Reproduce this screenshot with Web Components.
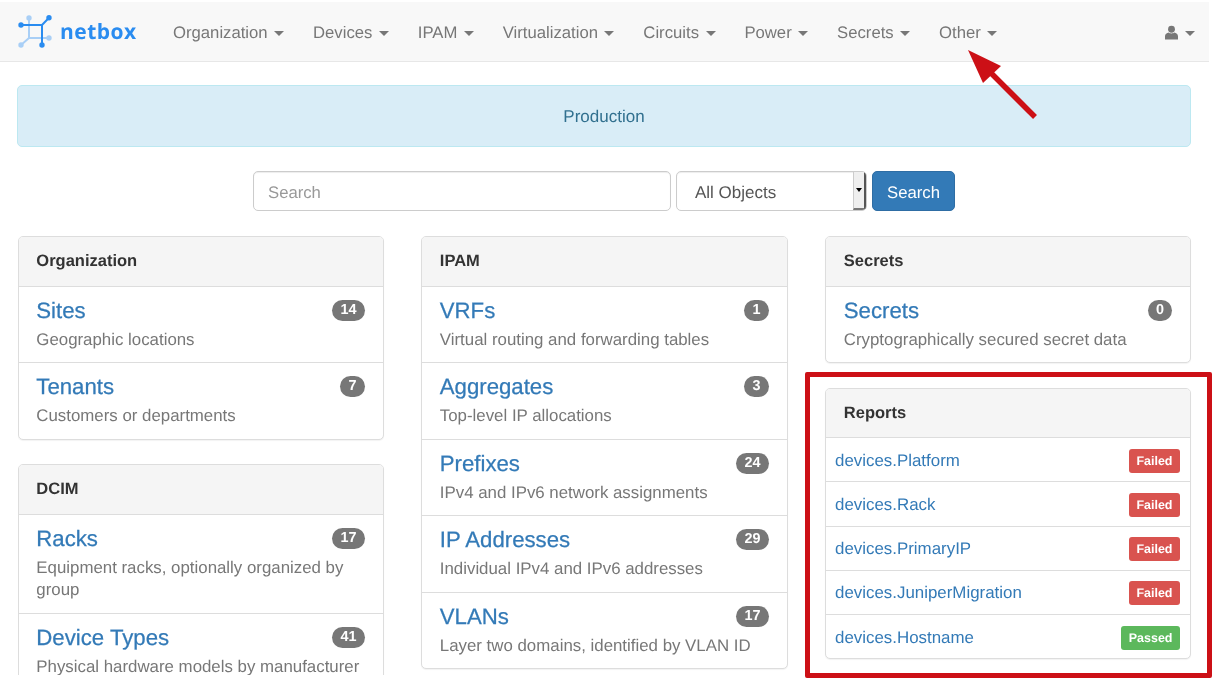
<!DOCTYPE html>
<html><head><meta charset="utf-8">
<style>
html,body{margin:0;padding:0;height:686px;overflow:hidden;background:#fff}
body{font-family:"Liberation Sans",Arial,sans-serif;font-size:17px;color:#333;position:relative;text-rendering:geometricPrecision;filter:blur(.3px)}
</style></head><body>
<template id="t-nav"><style>
:host{display:flex;align-items:center;width:1209px;height:59px;margin-top:2px;background:#f8f8f8;border-bottom:1px solid #e7e7e7;color:#777;font-size:16.7px}
.logo{display:flex;align-items:center;margin-left:18px;gap:8px;width:119px;flex:none}
.logo b{font:700 21px "Open Sans","Liberation Sans",sans-serif;color:#2a8cf0;letter-spacing:.5px;margin-top:1px}
.items{display:flex;flex:1;margin-left:36px;gap:28.9px;padding-top:2px}
.c{width:0;height:0;border-left:5px solid transparent;border-right:5px solid transparent;border-top:5px solid #777;margin-top:2px}
.user{display:flex;align-items:center;gap:7px;margin-right:14px;padding-top:2px}
</style>
<div class="logo"><svg width="34" height="33" viewBox="0 0 34 33" fill="none"><g stroke="#a9cff6" stroke-width="2"><path d="M11 3V23H31M11 23L3 30"/></g><g fill="#a9cff6"><circle cx="11" cy="3" r="2.7"/><circle cx="31" cy="23" r="2.7"/><circle cx="3" cy="30" r="2.7"/></g><g stroke="#2a8cf0" stroke-width="2"><path d="M3 10H24M24 10L31 2.8M24 10V30"/></g><g fill="#2a8cf0"><circle cx="3" cy="10" r="2.7"/><circle cx="31" cy="2.8" r="2.7"/><circle cx="24" cy="30" r="2.7"/></g></svg><b>netbox</b></div>
<div class="items"><slot></slot></div>
<div class="user"><svg width="13" height="15" viewBox="0 0 14 15" fill="#777"><circle cx="7" cy="4" r="3.7"/><path d="M0 15V11.5C0 9 2 8 4 7.5C5 8.8 9 8.8 10 7.5C12 8 14 9 14 11.5V15Z"/></svg><span class="c"></span></div>
</template>
<template id="t-navitem"><style>
:host{display:inline-flex;align-items:center;gap:6.5px;white-space:nowrap;color:#777}
.c{width:0;height:0;border-left:5px solid transparent;border-right:5px solid transparent;border-top:5px solid #777;margin-top:2px}
</style><slot></slot><span class="c"></span></template>
<template id="t-alert"><style>
:host{display:block;margin:23px 0 0 17px;width:1174px;height:62px;box-sizing:border-box;background:#d9edf7;border:1px solid #bce8f1;border-radius:5px;color:#31708f;text-align:center;line-height:62px}
</style><slot></slot></template>
<template id="t-search"><style>
:host{display:flex;margin:24px 0 0 253px;height:40px;gap:5px}
.in,.sel{box-sizing:border-box;height:40px;padding-top:3px;border:1px solid #ccc;border-radius:5px;background:#fff;box-shadow:inset 0 1px 1px rgba(0,0,0,.075);display:flex;align-items:center}
.in{width:418px;padding-left:14px;color:#999;font-size:16.7px}
.sel{width:191px;padding-left:18px;color:#555;position:relative;overflow:hidden}
.sp{position:absolute;right:0;top:0;bottom:0;width:13px;background:#efefef;border-left:1px solid #ccc;border-right:2px solid #555;border-bottom:2px solid #777;box-sizing:border-box;display:flex;align-items:center;justify-content:center}
.sp i{width:0;height:0;border-left:3.5px solid transparent;border-right:3.5px solid transparent;border-top:4px solid #000}
.btn{box-sizing:border-box;width:83px;height:40px;padding-top:3px;background:#337ab7;border:1px solid #2e6da4;border-radius:5px;color:#fff;display:flex;align-items:center;justify-content:center;font-size:16.7px}
</style>
<div class="in">Search</div><div class="sel">All Objects<span class="sp"><i></i></span></div><div class="btn">Search</div></template>
<template id="t-grid"><style>
:host{display:grid;grid-template-columns:366px 366.5px 366px;column-gap:37.5px;margin:25px 0 0 17.5px;align-items:start;height:439px;overflow:hidden;padding-right:6px}
</style><slot></slot></template>
<template id="t-col"><style>
:host{display:flex;flex-direction:column;gap:24.5px;min-width:0}
</style><slot></slot></template>
<template id="t-panel"><style>
:host{display:block;box-sizing:border-box;background:#fff;border:1px solid #ddd;border-radius:5px;box-shadow:0 1px 1px rgba(0,0,0,.05);overflow:hidden}
.h{height:49.5px;box-sizing:border-box;background:#f5f5f5;border-bottom:1px solid #ddd;padding-left:17.8px;font-weight:700;font-size:16.5px;line-height:49.4px;color:#333}
</style><div class="h"><slot name="h"></slot></div><slot></slot></template>
<template id="t-item"><style>
:host{display:block;box-sizing:border-box;padding:10px 18px 11px 17.8px;border-top:1px solid #ddd}
:host(:first-of-type){border-top:none}
.t{display:flex;justify-content:space-between;align-items:flex-start}
.n{font-size:22.2px;line-height:30px;margin-top:-1px;margin-bottom:1px;color:#337ab7;-webkit-text-stroke:.25px #337ab7}
.b{background:#777;color:#fff;font-weight:700;font-size:14.4px;line-height:15px;padding:3px 8px;border-radius:11px;margin-top:3px;min-width:5px;text-align:center}
.d{color:#777;font-size:16.85px;line-height:22.5px;margin-top:2px}
</style><div class="t"><span class="n"><slot name="n"></slot></span><span class="b"><slot name="b"></slot></span></div><div class="d"><slot></slot></div></template>
<template id="t-report"><style>
:host{display:flex;box-sizing:border-box;height:44.25px;padding:2px 10px 0 9px;align-items:center;justify-content:space-between;border-top:1px solid #ddd;color:#337ab7;font-size:16.9px}
:host(:first-of-type){border-top:none;height:43.25px}
.l{font-size:12.5px;font-weight:700;color:#fff;background:var(--c,#d9534f);padding:3px 7.5px;border-radius:3px;line-height:18px}
</style><span><slot></slot></span><span class="l"><slot name="l"></slot></span></template>
<template id="t-callout"><style>
:host{position:absolute;left:805px;top:372px;width:407px;height:306px;box-sizing:border-box;border:5px solid #cc1016;border-radius:2px}
</style></template>
<template id="t-arrow"><style>
:host{position:absolute;left:965px;top:47px;width:75px;height:75px}
</style><svg width="75" height="75" viewBox="0 0 75 75"><path d="M70 70 L26 26" stroke="#cc1016" stroke-width="5.5" fill="none"/><path d="M3 3 L36 19 L18 36Z" fill="#cc1016"/></svg></template>

<nb-nav><nb-navitem>Organization</nb-navitem><nb-navitem>Devices</nb-navitem><nb-navitem>IPAM</nb-navitem><nb-navitem>Virtualization</nb-navitem><nb-navitem>Circuits</nb-navitem><nb-navitem>Power</nb-navitem><nb-navitem>Secrets</nb-navitem><nb-navitem>Other</nb-navitem></nb-nav>
<nb-alert>Production</nb-alert>
<nb-search></nb-search>
<nb-grid>
<nb-col>
<nb-panel><span slot="h">Organization</span>
<nb-item><span slot="n">Sites</span><span slot="b">14</span>Geographic locations</nb-item>
<nb-item><span slot="n">Tenants</span><span slot="b">7</span>Customers or departments</nb-item></nb-panel>
<nb-panel><span slot="h">DCIM</span>
<nb-item><span slot="n">Racks</span><span slot="b">17</span>Equipment racks, optionally organized by group</nb-item>
<nb-item><span slot="n">Device Types</span><span slot="b">41</span>Physical hardware models by manufacturer</nb-item></nb-panel>
</nb-col>
<nb-col>
<nb-panel><span slot="h">IPAM</span>
<nb-item><span slot="n">VRFs</span><span slot="b">1</span>Virtual routing and forwarding tables</nb-item>
<nb-item><span slot="n">Aggregates</span><span slot="b">3</span>Top-level IP allocations</nb-item>
<nb-item><span slot="n">Prefixes</span><span slot="b">24</span>IPv4 and IPv6 network assignments</nb-item>
<nb-item><span slot="n">IP Addresses</span><span slot="b">29</span>Individual IPv4 and IPv6 addresses</nb-item>
<nb-item><span slot="n">VLANs</span><span slot="b">17</span>Layer two domains, identified by VLAN ID</nb-item></nb-panel>
</nb-col>
<nb-col>
<nb-panel><span slot="h">Secrets</span>
<nb-item><span slot="n">Secrets</span><span slot="b">0</span>Cryptographically secured secret data</nb-item></nb-panel>
<nb-panel><span slot="h">Reports</span>
<nb-report>devices.Platform<span slot="l">Failed</span></nb-report>
<nb-report>devices.Rack<span slot="l">Failed</span></nb-report>
<nb-report>devices.PrimaryIP<span slot="l">Failed</span></nb-report>
<nb-report>devices.JuniperMigration<span slot="l">Failed</span></nb-report>
<nb-report style="--c:#5cb85c">devices.Hostname<span slot="l">Passed</span></nb-report></nb-panel>
</nb-col>
</nb-grid>
<nb-callout></nb-callout><nb-arrow></nb-arrow>
<script>
for(const [tag,id] of [['nb-nav','t-nav'],['nb-navitem','t-navitem'],['nb-alert','t-alert'],['nb-search','t-search'],['nb-grid','t-grid'],['nb-col','t-col'],['nb-panel','t-panel'],['nb-item','t-item'],['nb-report','t-report'],['nb-callout','t-callout'],['nb-arrow','t-arrow']]){
 customElements.define(tag,class extends HTMLElement{constructor(){super();this.attachShadow({mode:'open'}).appendChild(document.getElementById(id).content.cloneNode(true));}});
}
</script>
</body></html>
